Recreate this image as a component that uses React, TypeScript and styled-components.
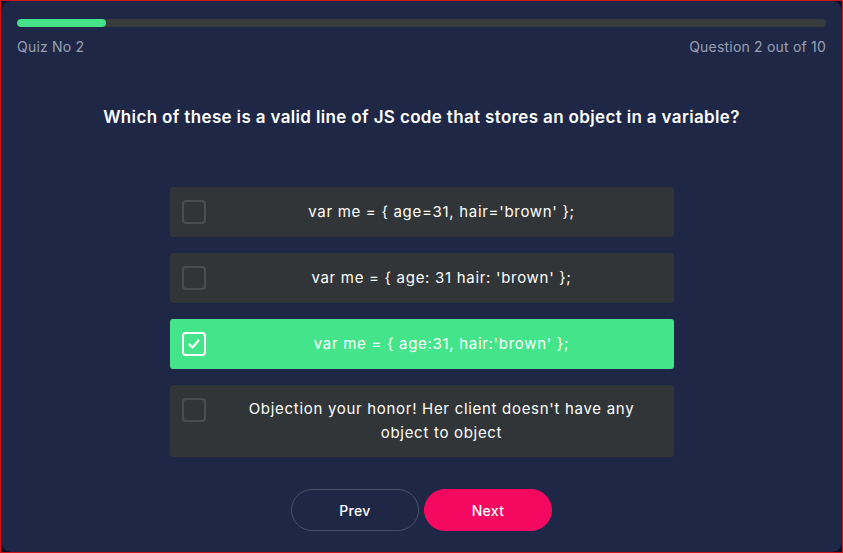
import React from "react";
import styled, { createGlobalStyle } from "styled-components";

const GlobalStyle = createGlobalStyle`
  html, body {
    margin: 0;
    padding: 0;
    height: 100%;
  }
  body {
    background: #0d1024;
    font-family: Inter, "Noto Sans", sans-serif;
  }
  #root {
    height: 100%;
  }
`;

const Frame = styled.div`
  box-sizing: border-box;
  height: 553px;
  border: 1px solid #d3131b;
  background: #0d1024;
`;

const Card = styled.div`
  box-sizing: border-box;
  height: 100%;
  background: #1e2746;
  border-radius: 10px;
  padding: 18px 16px 0 16px;
  display: flex;
  flex-direction: column;
  align-items: center;
`;

const Track = styled.div`
  width: 100%;
  height: 8px;
  border-radius: 4px;
  background: #383b3c;
  overflow: hidden;
`;

const Fill = styled.div`
  height: 100%;
  border-radius: 4px;
  background: #44e38a;
`;

const MetaRow = styled.div`
  width: 100%;
  display: flex;
  justify-content: space-between;
  margin-top: 11px;
  font-size: 14px;
  letter-spacing: 0.2px;
  color: #9ba0b3;
`;

const Question = styled.h2`
  margin: 52px 0 0;
  font-size: 17px;
  font-weight: 600;
  letter-spacing: 0.35px;
  color: #ffffff;
  text-align: center;
`;

const Options = styled.div`
  margin-top: 60px;
  width: 504px;
  display: flex;
  flex-direction: column;
  gap: 16px;
`;

const Option = styled.div<{ $selected?: boolean }>`
  box-sizing: border-box;
  min-height: 50px;
  padding: 12px 16px 12px 12px;
  border-radius: 3px;
  display: flex;
  align-items: center;
  background: ${(p) => (p.$selected ? "#44e58a" : "#313537")};
  cursor: pointer;
`;

const Box = styled.span<{ $selected?: boolean }>`
  box-sizing: border-box;
  flex: none;
  width: 24px;
  height: 24px;
  border-radius: 4px;
  border: 2px solid ${(p) => (p.$selected ? "#ffffff" : "#4b4e50")};
  display: flex;
  align-items: center;
  justify-content: center;
  align-self: flex-start;
  margin-top: 1px;
`;

const Label = styled.span`
  flex: 1;
  margin-left: 20px;
  text-align: center;
  font-size: 15px;
  letter-spacing: 0.7px;
  line-height: 24px;
  color: #ffffff;
`;

const Buttons = styled.div`
  margin-top: 32px;
  display: flex;
  gap: 5px;
`;

const Button = styled.button<{ $primary?: boolean }>`
  width: 128px;
  height: 42px;
  border-radius: 21px;
  font-family: Inter, sans-serif;
  font-size: 14px;
  font-weight: 500;
  letter-spacing: 0.3px;
  color: #ffffff;
  cursor: pointer;
  background: ${(p) => (p.$primary ? "#f5085f" : "transparent")};
  border: 1px solid ${(p) => (p.$primary ? "#f5085f" : "#4a5068")};
`;

const answers = [
  "var me = { age=31, hair='brown' };",
  "var me = { age: 31 hair: 'brown' };",
  "var me = { age:31, hair:'brown' };",
  "Objection your honor! Her client doesn't have any object to object",
];

const App: React.FC = () => {
  const selected = 2;
  return (
    <>
      <GlobalStyle />
      <Frame>
        <Card>
          <Track>
            <Fill style={{ width: "11%" }} />
          </Track>
          <MetaRow>
            <span>Quiz No 2</span>
            <span>Question 2 out of 10</span>
          </MetaRow>
          <Question>
            Which of these is a valid line of JS code that stores an object in a variable?
          </Question>
          <Options>
            {answers.map((a, i) => (
              <Option key={i} $selected={i === selected}>
                <Box $selected={i === selected}>
                  {i === selected && (
                    <svg width="14" height="14" viewBox="0 0 14 14">
                      <path d="M2.5 7.5 L5.5 10.5 L11.5 3.5" fill="none" stroke="#fff" strokeWidth="2.2" strokeLinecap="round" strokeLinejoin="round" />
                    </svg>
                  )}
                </Box>
                <Label>{a}</Label>
              </Option>
            ))}
          </Options>
          <Buttons>
            <Button>Prev</Button>
            <Button $primary>Next</Button>
          </Buttons>
        </Card>
      </Frame>
    </>
  );
};

export default App;
